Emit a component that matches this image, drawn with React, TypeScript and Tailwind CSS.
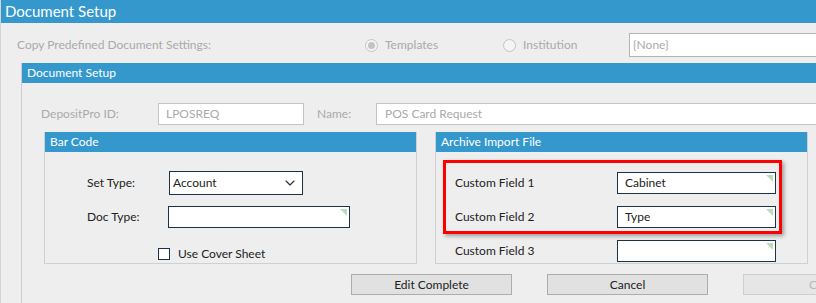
import { ChevronDown } from 'lucide-react';

const font = { fontFamily: '"Segoe UI", Lato, "Noto Sans", sans-serif' };

function Corner() {
  return (
    <span className="absolute right-[2px] top-[2px] w-0 h-0 border-l-[7px] border-l-transparent border-t-[7px] border-t-[#b9dcb9]" />
  );
}

function TextBox({ value, className }: { value?: string; className: string }) {
  return (
    <div className={`relative bg-white border border-[#1b3247] flex items-center pl-[7px] text-[12px] text-[#222] ${className}`}>
      {value}
      <Corner />
    </div>
  );
}

function PanelHeader({ title }: { title: string }) {
  return (
    <div className="h-[20px] bg-[#3498cc] text-white text-[12px] leading-[20px] pl-[5px]">{title}</div>
  );
}

export default function App() {
  return (
    <div className="w-[816px] h-[303px] overflow-hidden bg-[#eeeeee] border-l border-[#d4d4d4]" style={font}>
      <div className="h-[23px] bg-[#3498cc] text-white text-[15px] leading-[22px] pl-[5px] -ml-px">Document Setup</div>

      <div className="flex items-center h-[24px] mt-[10px] text-[12px] text-[#aaaaaa]">
        <span className="pl-[16px] w-[364px]">Copy Predefined Document Settings:</span>
        <span className="flex items-center gap-[7px] w-[138px]">
          <span className="w-[13px] h-[13px] rounded-full border border-[#c4c4c4] bg-[#f4f4f4] flex items-center justify-center">
            <span className="w-[7px] h-[7px] rounded-full bg-[#c4c4c4]" />
          </span>
          Templates
        </span>
        <span className="flex items-center gap-[7px] w-[126px]">
          <span className="w-[13px] h-[13px] rounded-full border border-[#c4c4c4] bg-[#f4f4f4]" />
          Institution
        </span>
        <div className="flex-1 h-[24px] bg-white border border-[#b4b4b4] border-r-0 flex items-center pl-[3px]">{'{None}'}</div>
      </div>

      <div className="ml-[20px] mt-[6px] w-[820px] border-l border-[#cdcdcd] h-[260px]">
        <PanelHeader title="Document Setup" />

        <div className="flex items-center h-[22px] mt-[20px] text-[12px] text-[#aaaaaa]">
          <span className="pl-[19px] w-[136px]">DepositPro ID:</span>
          <div className="w-[146px] h-[22px] bg-white border border-[#c4c4c4] pl-[7px] leading-[20px]">LPOSREQ</div>
          <span className="pl-[13px] w-[72px]">Name:</span>
          <div className="flex-1 h-[22px] bg-white border border-[#c4c4c4] border-r-0 pl-[8px] leading-[20px]">POS Card Request</div>
        </div>

        <div className="flex gap-[18px] mt-[7px] pl-[22px]">
          <div className="w-[373px] h-[132px] border border-[#d0d0d0] border-t-0 flex flex-col">
            <PanelHeader title="Bar Code" />
            <div className="flex flex-col text-[12px] text-[#222]">
              <div className="flex items-center mt-[19px] h-[24px]">
                <span className="pl-[42px] w-[124px]">Set Type:</span>
                <div className="w-[134px] h-[24px] bg-white border border-[#1b3247] flex items-center justify-between pl-[3px] pr-[4px]">
                  Account
                  <ChevronDown className="w-[16px] h-[16px] text-[#333]" strokeWidth={1.75} />
                </div>
              </div>
              <div className="flex items-center mt-[11px] h-[22px]">
                <span className="pl-[42px] w-[123px]">Doc Type:</span>
                <TextBox className="w-[182px] h-[22px]" />
              </div>
              <div className="flex items-center mt-[17px] pl-[113px] gap-[8px]">
                <span className="w-[12px] h-[12px] border border-[#1b3247] bg-white" />
                Use Cover Sheet
              </div>
            </div>
          </div>

          <div className="w-[373px] h-[132px] border border-[#d0d0d0] border-t-0 flex flex-col">
            <PanelHeader title="Archive Import File" />
            <div className="flex flex-col text-[12px] text-[#222]">
              <div className="ml-[7px] mt-[8px] w-[339px] border-[3px] border-[#ff0000] shadow-[2px_2px_4px_rgba(0,0,0,0.35)] pt-[9px] pb-[3px] flex flex-col gap-[12px]">
                <div className="flex items-center h-[22px]">
                  <span className="pl-[9px] w-[171px]">Custom Field 1</span>
                  <TextBox value="Cabinet" className="w-[159px] h-[22px]" />
                </div>
                <div className="flex items-center h-[22px]">
                  <span className="pl-[9px] w-[171px]">Custom Field 2</span>
                  <TextBox value="Type" className="w-[159px] h-[22px]" />
                </div>
              </div>
              <div className="flex items-center h-[22px] mt-[6px]">
                <span className="pl-[19px] w-[181px]">Custom Field 3</span>
                <TextBox className="w-[159px] h-[22px]" />
              </div>
            </div>
          </div>
        </div>

        <div className="flex gap-[35px] mt-[10px] pl-[329px] text-[12px]">
          <button className="shrink-0 w-[161px] h-[21px] bg-[#e1e1e1] border border-[#adadad] text-[#222] leading-[19px]">Edit Complete</button>
          <button className="shrink-0 w-[161px] h-[21px] bg-[#e1e1e1] border border-[#adadad] text-[#222] leading-[19px]">Cancel</button>
          <button className="shrink-0 w-[161px] h-[21px] bg-[#e6e6e6] border border-[#cfcfcf] text-[#b8b8b8] leading-[19px]">Close</button>
        </div>
      </div>
    </div>
  );
}
